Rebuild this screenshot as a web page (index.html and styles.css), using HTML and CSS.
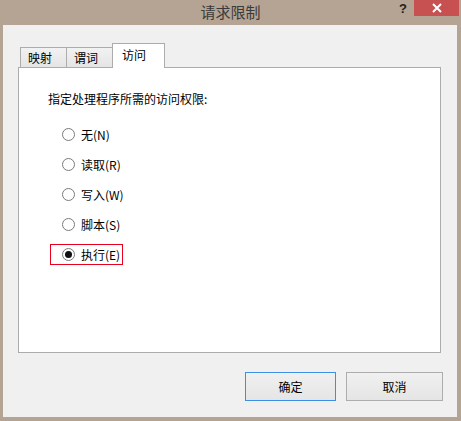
FILE: index.html
```html
<!DOCTYPE html>
<html lang="zh-CN">
<head>
  <meta charset="UTF-8">
  <meta name="viewport" content="width=device-width, initial-scale=1.0">
  <title>请求限制</title>
  <link rel="stylesheet" href="styles.css">
</head>
<body>
  <div class="window">
    <!-- 标题栏 -->
    <div class="titlebar">
      <span></span>
      <span class="title">请求限制</span>
      <div class="controls">
        <span class="help">?</span>
        <span class="close">
          <svg width="10" height="10" viewBox="0 0 10 10"><path d="M1 1L9 9M9 1L1 9" stroke="#fff" stroke-width="2"/></svg>
        </span>
      </div>
    </div>

    <div class="client">
      <div class="tabs">
        <div class="tab">映射</div>
        <div class="tab">谓词</div>
        <div class="tab active">访问</div>
      </div>

      <div class="panel">
        <p class="label">指定处理程序所需的访问权限:</p>
        <div class="options">
          <label class="option"><span class="radio"></span>无(N)</label>
          <label class="option"><span class="radio"></span>读取(R)</label>
          <label class="option"><span class="radio"></span>写入(W)</label>
          <label class="option"><span class="radio"></span>脚本(S)</label>
          <label class="option selected"><span class="radio checked"></span>执行(E)</label>
        </div>
      </div>

      <div class="buttons">
        <button type="button" class="btn btn-ok">确定</button>
        <button type="button" class="btn btn-cancel">取消</button>
      </div>
    </div>
  </div>
</body>
</html>
```

FILE: styles.css
```css
body { margin: 0; font-family: "Noto Sans CJK SC", "Noto Sans", sans-serif; font-size: 12px; color: #000; }

.window {
  width: 461px;
  height: 421px;
  background-color: #b5a493;
  display: flex;
  flex-direction: column;
}

.titlebar {
  height: 25px;
  display: grid;
  grid-template-columns: 1fr auto 1fr;
  align-items: start;
}
.title { font-size: 15px; line-height: 24px; color: #3a3a3a; }
.controls { display: flex; justify-content: flex-end; align-items: flex-start; }
.help { font-family: "Liberation Sans", sans-serif; font-weight: bold; font-size: 13px; line-height: 15px; color: #222; margin-right: 7px; margin-top: 1px; }
.close {
  width: 45px;
  height: 16px;
  margin-right: 2px;
  background-color: #c75050;
  display: flex;
  align-items: center;
  justify-content: center;
}

.client {
  flex: 1;
  margin: 0 4px 4px 3px;
  background-color: #f0f0f0;
  padding: 18px 16px 0 15px;
  display: flex;
  flex-direction: column;
}

.tabs { display: flex; align-items: flex-end; padding-left: 2px; margin-bottom: -1px; }
.tab {
  height: 21px;
  line-height: 20px;
  padding: 0 7px;
  border: 1px solid #acacac;
  border-bottom: none;
  background: linear-gradient(#f2f2f2, #e4e4e4);
  box-sizing: border-box;
  width: 47px;
}
.tab + .tab { margin-left: -1px; }
.tab.active {
  position: relative;
  height: 25px;
  width: 53px;
  padding: 0 9px;
  line-height: 21px;
  background: #fff;
}

.panel {
  height: 286px;
  box-sizing: border-box;
  background: #fff;
  border: 1px solid #acacac;
  padding: 23px 0 0 29px;
}
.label { margin: 0; line-height: 16px; }

.options { display: flex; flex-direction: column; gap: 9px; margin-top: 17px; margin-left: 2px; }
.option {
  align-self: flex-start;
  height: 21px;
  box-sizing: border-box;
  border: 1px solid transparent;
  display: flex;
  align-items: center;
  padding: 0 2px 0 11px;
}
.option.selected { border-color: #e8001c; }
.radio {
  width: 13px;
  height: 13px;
  box-sizing: border-box;
  border: 1px solid #7a7a7a;
  border-radius: 50%;
  margin-right: 6px;
  display: flex;
  align-items: center;
  justify-content: center;
}
.radio.checked::after { content: ""; width: 7px; height: 7px; border-radius: 50%; background: #111; }

.buttons { display: flex; justify-content: flex-end; gap: 10px; margin-top: 19px; margin-right: -2px; }
.btn {
  height: 29px;
  font-family: inherit;
  font-size: 12px;
  background: linear-gradient(#f0f0f0, #e5e5e5);
  border: 1px solid #adadad;
  padding: 0;
}
.btn-ok { width: 91px; border-color: #3c8fe6; }
.btn-cancel { width: 97px; }
```
